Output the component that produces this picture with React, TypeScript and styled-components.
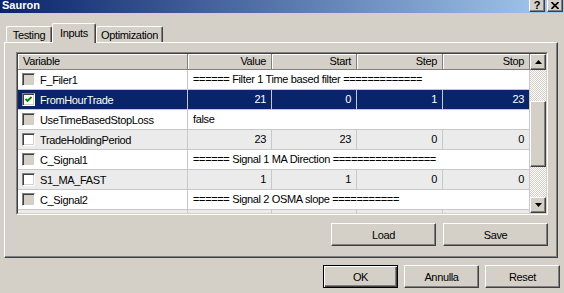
import React from "react";
import styled, { createGlobalStyle, css } from "styled-components";

const Global = createGlobalStyle`
  html, body {
    margin: 0;
    padding: 0;
    background: #d4d0c8;
  }
  body {
    font-family: "Liberation Sans", Arial, sans-serif;
    font-size: 11px;
    letter-spacing: -0.35px;
    color: #000;
  }
`;

const raised = css`
  border-top: 1px solid #fff;
  border-left: 1px solid #fff;
  border-right: 1px solid #404040;
  border-bottom: 1px solid #404040;
  box-shadow: inset -1px -1px #808080;
  background: #d4d0c8;
`;

const Window = styled.div`
  width: 564px;
  height: 293px;
  background: #d4d0c8;
  display: flex;
  flex-direction: column;
  overflow: hidden;
`;

const TitleBar = styled.div`
  height: 13px;
  flex: none;
  display: flex;
  align-items: flex-start;
  justify-content: space-between;
  background: linear-gradient(to right, #0a246a, #a6caf0);
`;

const Title = styled.span`
  color: #fff;
  font-weight: bold;
  font-size: 11px;
  line-height: 11px;
  letter-spacing: 0;
  padding-left: 2px;
`;

const TitleButtons = styled.div`
  display: flex;
  gap: 2px;
  margin-top: -4px;
  padding-right: 1px;
`;

const TitleButton = styled.div`
  ${raised};
  width: 14px;
  height: 12px;
  display: flex;
  align-items: center;
  justify-content: center;
  font-weight: bold;
  font-size: 11px;
  line-height: 11px;
  padding-top: 2px;
`;

const Body = styled.div`
  flex: 1;
  display: flex;
  flex-direction: column;
  padding: 10px 6px 0 4px;
`;

const TabStrip = styled.div`
  display: flex;
  align-items: flex-end;
  height: 19px;
  padding-left: 2px;
  position: relative;
  z-index: 1;
`;

const Tab = styled.div<{ $active?: boolean; $w: number }>`
  width: ${(p) => p.$w}px;
  box-sizing: border-box;
  height: ${(p) => (p.$active ? 20 : 16)}px;
  margin-bottom: ${(p) => (p.$active ? -1 : 0)}px;
  background: #d4d0c8;
  border-top: 1px solid #fff;
  border-left: 1px solid #fff;
  border-right: 1px solid #404040;
  box-shadow: inset -1px 0 #808080;
  border-radius: 2px 2px 0 0;
  display: flex;
  justify-content: center;
  padding-top: ${(p) => (p.$active ? 3 : 2)}px;
  line-height: 12px;
`;

const Panel = styled.div`
  width: 554px;
  height: 216px;
  box-sizing: border-box;
  ${raised};
  padding: 9px 9px 0 11px;
  display: flex;
  flex-direction: column;
  gap: 8px;
`;

const ListView = styled.div`
  height: 163px;
  box-sizing: border-box;
  border-top: 1px solid #808080;
  border-left: 1px solid #808080;
  border-right: 1px solid #fff;
  border-bottom: 1px solid #fff;
`;

const ListInner = styled.div`
  height: 100%;
  box-sizing: border-box;
  border-top: 1px solid #404040;
  border-left: 1px solid #404040;
  border-right: 1px solid #d4d0c8;
  border-bottom: 1px solid #d4d0c8;
  display: flex;
  background: #fff;
`;

const TableArea = styled.div`
  flex: 1;
  overflow: hidden;
`;

const COLS = "170px 84px 85px 86px 87px";

const HeaderRow = styled.div`
  display: grid;
  grid-template-columns: ${COLS};
  height: 16px;
`;

const HeaderCell = styled.div<{ $right?: boolean }>`
  background: #d4d0c8;
  border-right: 1px solid #808080;
  border-bottom: 1px solid #808080;
  box-shadow: inset 1px 1px #fff;
  padding: 0 5px 0 5px;
  text-align: ${(p) => (p.$right ? "right" : "left")};
  line-height: 15px;
`;

const Row = styled.div<{ $alt?: boolean; $sel?: boolean }>`
  display: grid;
  grid-template-columns: ${COLS};
  height: 20px;
  box-sizing: border-box;
  border-bottom: 1px solid #c8c8c8;
  background: ${(p) => (p.$sel ? "#0a246a" : p.$alt ? "#ebebeb" : "#fff")};
  color: ${(p) => (p.$sel ? "#fff" : "#000")};
`;

const Cell = styled.div<{ $right?: boolean; $span?: boolean }>`
  border-right: 1px solid #c8c8c8;
  line-height: 19px;
  padding: 0 5px;
  white-space: nowrap;
  overflow: hidden;
  text-align: ${(p) => (p.$right ? "right" : "left")};
  ${(p) => p.$span && "grid-column: 2 / -1;"}
`;

const NameCell = styled.div`
  border-right: 1px solid #c8c8c8;
  display: flex;
  align-items: center;
  gap: 5px;
  padding-left: 4px;
  white-space: nowrap;
`;

const Check = styled.div<{ $grey?: boolean }>`
  width: 13px;
  height: 13px;
  box-sizing: border-box;
  flex: none;
  border-top: 1px solid #808080;
  border-left: 1px solid #808080;
  border-right: 1px solid #fff;
  border-bottom: 1px solid #fff;
  box-shadow: inset 1px 1px #404040, inset -1px -1px #d4d0c8;
  background: ${(p) => (p.$grey ? "#d4d0c8" : "#fff")};
  display: flex;
  align-items: center;
  justify-content: center;
`;

const ScrollBar = styled.div`
  width: 16px;
  flex: none;
  display: flex;
  flex-direction: column;
`;

const ScrollButton = styled.div`
  ${raised};
  width: 16px;
  height: 16px;
  box-sizing: border-box;
  box-shadow: inset -1px -1px #808080, inset 1px 1px #d4d0c8;
  display: flex;
  align-items: center;
  justify-content: center;
  flex: none;
`;

const Track = styled.div<{ $h: number }>`
  height: ${(p) => p.$h}px;
  flex: none;
  background-image: conic-gradient(#fff 25%, #d4d0c8 0 50%, #fff 0 75%, #d4d0c8 0);
  background-size: 2px 2px;
`;

const Thumb = styled.div`
  ${raised};
  box-sizing: border-box;
  height: 66px;
  flex: none;
  box-shadow: inset -1px -1px #808080, inset 1px 1px #d4d0c8;
`;

const ButtonRow = styled.div<{ $gap: number }>`
  display: flex;
  justify-content: flex-end;
  gap: ${(p) => p.$gap}px;
`;

const Button = styled.div<{ $w: number; $default?: boolean }>`
  width: ${(p) => p.$w}px;
  height: 23px;
  box-sizing: border-box;
  ${raised};
  box-shadow: inset -1px -1px #808080, inset 1px 1px #d4d0c8;
  display: flex;
  align-items: center;
  justify-content: center;
  ${(p) =>
    p.$default &&
    css`
      border: 1px solid #000;
      box-shadow: inset 1px 1px #fff, inset -1px -1px #404040, inset -2px -2px #808080;
    `}
`;

const BottomRow = styled(ButtonRow)`
  padding-top: 7px;
  margin-right: -2px;
`;

type Data = {
  name: string;
  grey?: boolean;
  checked?: boolean;
  span?: string;
  vals?: string[];
};

const rows: Data[] = [
  { name: "F_Filer1", grey: true, span: "====== Filter 1 Time based filter =============" },
  { name: "FromHourTrade", checked: true, vals: ["21", "0", "1", "23"] },
  { name: "UseTimeBasedStopLoss", grey: true, span: "false" },
  { name: "TradeHoldingPeriod", vals: ["23", "23", "0", "0"] },
  { name: "C_Signal1", grey: true, span: "====== Signal 1 MA Direction =================" },
  { name: "S1_MA_FAST", vals: ["1", "1", "0", "0"] },
  { name: "C_Signal2", grey: true, span: "====== Signal 2 OSMA slope ===========" },
];

const Arrow = ({ down }: { down?: boolean }) => (
  <svg width="7" height="4" viewBox="0 0 7 4">
    <polygon points={down ? "0,0 7,0 3.5,4" : "3.5,0 7,4 0,4"} fill="#000" />
  </svg>
);

export default function App() {
  return (
    <Window>
      <Global />
      <TitleBar>
        <Title>Sauron</Title>
        <TitleButtons>
          <TitleButton>?</TitleButton>
          <TitleButton>
            <svg width="8" height="7" viewBox="0 0 8 7">
              <path d="M0.5 0 L7.5 7 M7.5 0 L0.5 7" stroke="#000" strokeWidth="1.6" />
            </svg>
          </TitleButton>
        </TitleButtons>
      </TitleBar>
      <Body>
        <TabStrip>
          <Tab $w={46}>Testing</Tab>
          <Tab $w={44} $active>
            Inputs
          </Tab>
          <Tab $w={67}>Optimization</Tab>
        </TabStrip>
        <Panel>
          <ListView>
            <ListInner>
              <TableArea>
                <HeaderRow>
                  <HeaderCell>Variable</HeaderCell>
                  <HeaderCell $right>Value</HeaderCell>
                  <HeaderCell $right>Start</HeaderCell>
                  <HeaderCell $right>Step</HeaderCell>
                  <HeaderCell $right>Stop</HeaderCell>
                </HeaderRow>
                {rows.map((r, i) => (
                  <Row key={r.name} $alt={i % 2 === 1} $sel={r.checked}>
                    <NameCell>
                      <Check $grey={r.grey}>
                        {r.checked && (
                          <svg width="7" height="7" viewBox="0 0 7 7">
                            <path d="M0.5 3 L2.5 5 L6.5 1" stroke="#008000" strokeWidth="1.8" fill="none" />
                          </svg>
                        )}
                      </Check>
                      {r.name}
                    </NameCell>
                    {r.span !== undefined ? (
                      <Cell $span>{r.span}</Cell>
                    ) : (
                      r.vals!.map((v, j) => (
                        <Cell key={j} $right>
                          {v}
                        </Cell>
                      ))
                    )}
                  </Row>
                ))}
                <Row $alt>
                  <NameCell />
                  <Cell />
                  <Cell />
                  <Cell />
                  <Cell />
                </Row>
              </TableArea>
              <ScrollBar>
                <ScrollButton>
                  <Arrow />
                </ScrollButton>
                <Track $h={31} />
                <Thumb />
                <Track $h={30} />
                <ScrollButton>
                  <Arrow down />
                </ScrollButton>
              </ScrollBar>
            </ListInner>
          </ListView>
          <ButtonRow $gap={7}>
            <Button $w={105}>Load</Button>
            <Button $w={105}>Save</Button>
          </ButtonRow>
        </Panel>
        <BottomRow $gap={6}>
          <Button $w={75} $default>
            OK
          </Button>
          <Button $w={75}>Annulla</Button>
          <Button $w={75}>Reset</Button>
        </BottomRow>
      </Body>
    </Window>
  );
}
